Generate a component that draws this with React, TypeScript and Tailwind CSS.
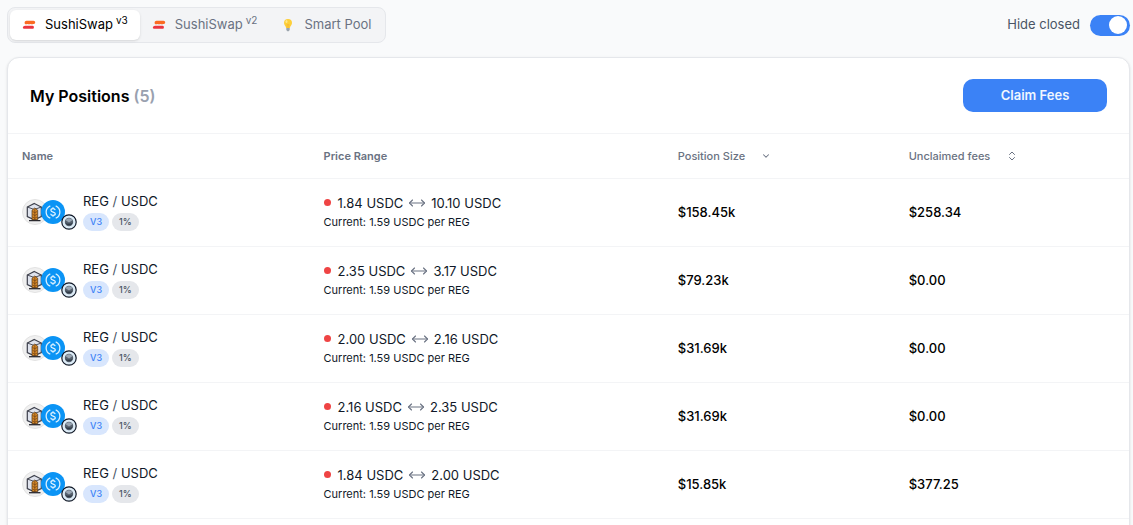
import React, { useState } from "react";
import { ChevronDown, ChevronsUpDown, MoveHorizontal } from "lucide-react";
import clsx from "clsx";

type Position = {
  id: number;
  min: string;
  max: string;
  size: string;
  fees: string;
};

const positions: Position[] = [
  { id: 1, min: "1.84", max: "10.10", size: "$158.45k", fees: "$258.34" },
  { id: 2, min: "2.35", max: "3.17", size: "$79.23k", fees: "$0.00" },
  { id: 3, min: "2.00", max: "2.16", size: "$31.69k", fees: "$0.00" },
  { id: 4, min: "2.16", max: "2.35", size: "$31.69k", fees: "$0.00" },
  { id: 5, min: "1.84", max: "2.00", size: "$15.85k", fees: "$377.25" },
];

const tabs = [
  { id: "v3", label: "SushiSwap", version: "v3" },
  { id: "v2", label: "SushiSwap", version: "v2" },
  { id: "smart", label: "Smart Pool", version: "" },
];

function SushiIcon() {
  return (
    <svg viewBox="0 0 14 14" className="size-3.5" aria-hidden="true">
      <path d="M4.500 2.800h7c1 0 1.700.8 1.700 1.600 0 .9-.8 1.500-1.700 1.500-.7 0-.8.3-1.500.3s-.9-.3-1.500-.3-.9.4-1.600.4-.9-.4-1.500-.4-.9.3-1.500.3-1.300-.4-1.300-1.500c0-1.100.9-1.900 1.900-1.900z" fill="#fb6a22" />
      <path d="M3 7.800h7.700c.9 0 1.200.9 1.200 1.700 0 .8-.4 1.200-1 1.200H1.800c-.7 0-1-.5-.9-1.200C1.100 8.500 1.900 7.800 3 7.800z" fill="#ea3440" />
    </svg>
  );
}

function BulbIcon() {
  return (
    <svg viewBox="0 0 14 14" className="size-3.5" aria-hidden="true">
      <path d="M7 1a4 4 0 0 0-4 4c0 2 1.700 2.700 2.100 5h3.800C9.300 7.700 11 7 11 5a4 4 0 0 0-4-4z" fill="#fdcf3a" />
      <path d="M6.300 9.800 6 6.500l1 .5 1-.5-.3 3.300" fill="none" stroke="#f5b02c" strokeWidth=".6" />
      <ellipse cx="5.500" cy="3.600" rx="1" ry="1.500" fill="#ffe88a" />
      <path d="M5.300 10h3.400v2L7.700 13.200H6.300L5.300 12z" fill="#9ba5ae" />
    </svg>
  );
}

function RegIcon() {
  return (
    <svg viewBox="0 0 26 26" className="size-[26px]" aria-hidden="true">
      <circle cx="13" cy="13" r="12.500" fill="#f0f0f0" stroke="#e2e2e2" />
      <path d="m12.300 4.500 7 3.500v9.500l-7 3.300-7-3.300V8z" fill="#dfe3ed" stroke="#3d404c" strokeWidth="1.200" />
      <path d="m5.300 8 7 2.500 7-2.500" fill="none" stroke="#3d404c" strokeWidth=".9" />
      <path d="M7 21.700h11.500" stroke="#292a32" strokeWidth="1.300" />
      <path d="M10 11.200 12.800 9l2.900 2.200v9.500H10z" fill="#d88a28" stroke="#4c3219" strokeWidth=".7" />
      <path d="M12.800 10v11M10.500 12.500l2.300 1.200 2.400-1.200M10.500 15.300l2.300 1.200 2.400-1.200M10.500 18l2.300 1.200 2.400-1.200" fill="none" stroke="#704016" strokeWidth=".7" />
    </svg>
  );
}

function UsdcIcon() {
  return (
    <svg viewBox="0 0 24 24" className="size-6" aria-hidden="true">
      <circle cx="12" cy="12" r="12" fill="#0b94f5" />
      <path d="M9.300 5.800a6.700 6.700 0 0 0 0 12.400M14.700 5.800a6.700 6.700 0 0 1 0 12.400" fill="none" stroke="#d9f0ff" strokeWidth="1.300" />
      <path d="M14.200 10.200c-.2-1-1-1.500-2.200-1.500s-2.100.6-2.100 1.600c0 2.400 4.400 1.100 4.400 3.500 0 1-.9 1.600-2.300 1.600s-2.200-.6-2.300-1.700M12 7.200v1.500M12 15.300v1.500" fill="none" stroke="#e8f6ff" strokeWidth="1.200" />
    </svg>
  );
}

function GnosisIcon() {
  return (
    <svg viewBox="0 0 16 16" className="size-4" aria-hidden="true">
      <circle cx="8" cy="8" r="7.200" fill="#dcebf6" stroke="#101827" strokeWidth="1.200" />
      <circle cx="8" cy="8" r="4.200" fill="#56616e" />
      <path d="M4.600 6.300C5.200 4.900 6.500 4.200 8 4.200s2.800.7 3.400 2.100L8 8.600z" fill="#9aa6b3" />
      <path d="M4.300 8.300a3.800 3.800 0 0 0 7.400 0C10.500 10 9 10 8 9.200 7 10 5.500 10 4.300 8.300z" fill="#2f3a47" />
    </svg>
  );
}

function PositionRow({ position }: { position: Position }) {
  return (
    <tr className="h-[68px] border-t border-gray-100">
      <td className="pb-0.5 pl-3.5">
        <div className="flex items-center">
          {/* Token pair with the network badge */}
          <div className="flex items-center">
            <RegIcon />
            <div className="-ml-[7px]">
              <UsdcIcon />
            </div>
            <div className="-ml-1 mt-5">
              <GnosisIcon />
            </div>
          </div>
          <div className="ml-1.5">
            <p className="text-[13px] leading-[18px] text-gray-900">
              REG <span className="text-gray-600">/</span> USDC
            </p>
            <div className="mt-[3px] flex gap-[3px] text-[9px] font-medium leading-[18px]">
              <span className="rounded-full bg-[#d8e6fd] px-[7px] text-[#3b82f6]">V3</span>
              <span className="rounded-full bg-gray-200 px-[7px] text-gray-600">1%</span>
            </div>
          </div>
        </div>
      </td>
      <td className="pb-0.5 pl-3.5 text-gray-900">
        <div className="flex items-center text-[13px] leading-5">
          <span className="mr-[7px] size-[7px] rounded-full bg-[#ef4444]" />
          {position.min} USDC
          <MoveHorizontal className="mx-[5px] size-[18px] text-gray-500" strokeWidth={1.5} />
          {position.max} USDC
        </div>
        <p className="text-[11px] leading-[18px]">Current: 1.59 USDC per REG</p>
      </td>
      <td className="pl-3.5 text-[13px] font-medium">{position.size}</td>
      <td className="pl-3.5 text-[13px] font-medium">{position.fees}</td>
    </tr>
  );
}

export default function App() {
  const [tab, setTab] = useState("v3");
  const [hideClosed, setHideClosed] = useState(true);

  return (
    <div className="h-screen overflow-hidden bg-gray-50 pl-[7px] pr-[3px] pt-[7px] font-['Inter',sans-serif] text-black">
      <div className="mb-3.5 flex items-center justify-between">
        <div role="tablist" className="flex rounded-lg border border-gray-200 bg-gray-100 p-0.5">
          {tabs.map((item) => (
            <button
              key={item.id}
              type="button"
              role="tab"
              aria-selected={tab === item.id}
              onClick={() => setTab(item.id)}
              className={clsx(
                "flex h-[30px] items-center gap-[9px] rounded-md px-3 text-[13px]",
                tab === item.id ? "bg-white text-black shadow-sm" : "text-gray-500"
              )}>
              {item.version ? <SushiIcon /> : <BulbIcon />}
              <span>
                {item.label}
                {item.version && <sup className="ml-[3px] text-[10px]">{item.version}</sup>}
              </span>
            </button>
          ))}
        </div>

        <label className="flex items-center gap-2.5 text-[13px] text-gray-600">
          Hide closed
          <input
            type="checkbox"
            role="switch"
            checked={hideClosed}
            onChange={(e) => setHideClosed(e.target.checked)}
            className="flex h-[21px] w-10 appearance-none items-center rounded-full bg-gray-300 px-[3px] before:size-[18px] before:rounded-full before:bg-white checked:justify-end checked:bg-[#3b82f6]"
          />
        </label>
      </div>

      <div className="overflow-hidden rounded-xl border border-gray-200 bg-white shadow-sm">
        <div className="flex items-center justify-between px-[22px] py-[21px]">
          <h1 className="text-base font-semibold">
            My Positions <span className="text-gray-400">(5)</span>
          </h1>
          <button type="button" className="h-[33px] w-36 rounded-[10px] bg-[#3b82f6] text-[13px] font-semibold text-blue-50">
            Claim Fees
          </button>
        </div>

        <table className="w-full table-fixed border-collapse text-left">
          <thead>
            <tr className="h-[45px] border-t border-gray-100 text-[11px] text-gray-500">
              <th className="w-[26.9%] pl-3.5 font-semibold">Name</th>
              <th className="w-[31.6%] pl-3.5 font-semibold">Price Range</th>
              <th className="w-[20.6%] pl-3.5 font-medium">
                <button type="button" className="flex items-center gap-4">
                  Position Size <ChevronDown className="size-2.5" strokeWidth={2.5} />
                </button>
              </th>
              <th className="pl-3.5 font-medium">
                <button type="button" className="flex items-center gap-4">
                  Unclaimed fees <ChevronsUpDown className="size-3" />
                </button>
              </th>
            </tr>
          </thead>
          <tbody className="border-b border-gray-100">
            {positions.map((position) => (
              <PositionRow key={position.id} position={position} />
            ))}
          </tbody>
        </table>
        <div className="h-16" />
      </div>
    </div>
  );
}
